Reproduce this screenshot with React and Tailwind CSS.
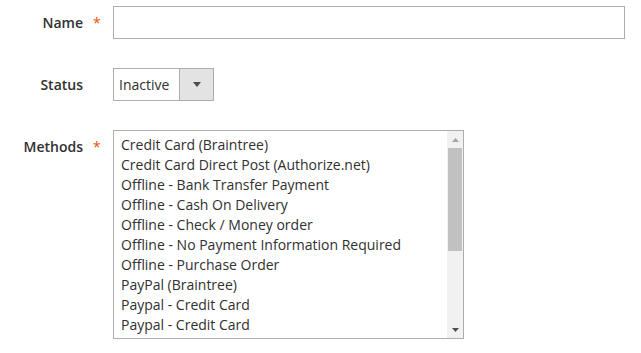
import React from 'react';

const methods = [
  'Credit Card (Braintree)',
  'Credit Card Direct Post (Authorize.net)',
  'Offline - Bank Transfer Payment',
  'Offline - Cash On Delivery',
  'Offline - Check / Money order',
  'Offline - No Payment Information Required',
  'Offline - Purchase Order',
  'PayPal (Braintree)',
  'Paypal - Credit Card',
  'Paypal - Credit Card',
];

function Label({ text, required, className = '' }) {
  return (
    <div className={`w-[113px] shrink-0 flex justify-end ${className}`}>
      <span className="font-semibold text-[14px] text-[#303030]">{text}</span>
      <span className="w-[30px] pl-[10px] text-[#eb5202] text-[14px]">{required ? '*' : ''}</span>
    </div>
  );
}

export default function App() {
  return (
    <div
      className="w-[641px] h-[353px] bg-white pt-[6px] overflow-hidden"
      style={{ fontFamily: '"Open Sans", sans-serif' }}
    >
      <div className="flex items-center">
        <Label text="Name" required />
        <input
          type="text"
          className="w-[512px] h-[33px] border border-[#adadad] bg-white outline-none"
        />
      </div>

      <div className="flex items-center mt-[29px]">
        <Label text="Status" />
        <div className="flex h-[33px] w-[101px] border border-[#adadad] bg-white">
          <span className="flex-1 pl-[5px] flex items-center text-[14px] text-[#303030]">Inactive</span>
          <span className="w-[34px] bg-[#e3e3e3] border-l border-[#adadad] flex items-center justify-center">
            <svg width="8" height="5" viewBox="0 0 8 5">
              <path d="M0 0 L8 0 L4 5 Z" fill="#514943" />
            </svg>
          </span>
        </div>
      </div>

      <div className="flex items-start mt-[29px]">
        <Label text="Methods" required className="pt-[6px]" />
        <div className="flex w-[351px] h-[209px] border border-[#adadad] bg-white">
          <ul className="flex-1 pt-[4px] pl-[7px] overflow-hidden">
            {methods.map((m, i) => (
              <li key={i} className="h-[20px] leading-[20px] text-[14px] text-[#303030] whitespace-nowrap">
                {m}
              </li>
            ))}
          </ul>
          <div className="w-[16px] bg-[#f1f1f1] flex flex-col">
            <div className="h-[17px] flex items-center justify-center">
              <svg width="7" height="4" viewBox="0 0 7 4">
                <path d="M0 4 L7 4 L3.5 0 Z" fill="#a3a3a3" />
              </svg>
            </div>
            <div className="mx-[1px] h-[103px] bg-[#c1c1c1]" />
            <div className="flex-1" />
            <div className="h-[17px] flex items-center justify-center">
              <svg width="7" height="4" viewBox="0 0 7 4">
                <path d="M0 0 L7 0 L3.5 4 Z" fill="#505050" />
              </svg>
            </div>
          </div>
        </div>
      </div>
    </div>
  );
}
